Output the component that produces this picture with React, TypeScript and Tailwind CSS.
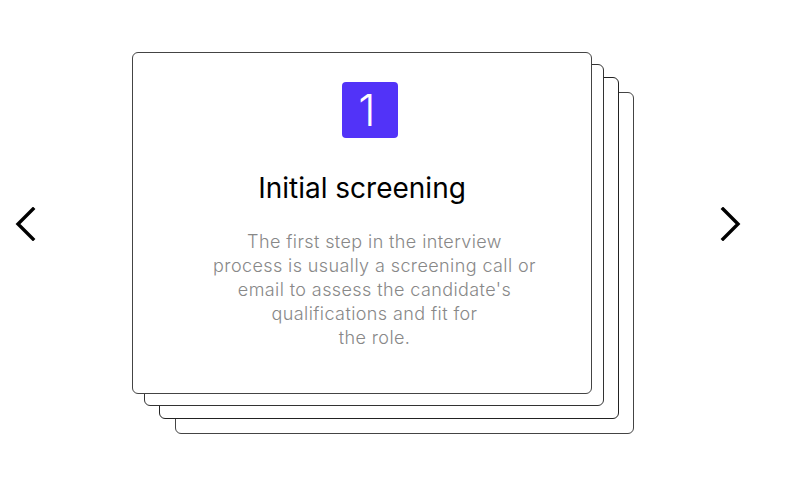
import React from "react";

const font = { fontFamily: "Inter, 'Noto Sans', sans-serif" };

function Chevron({ dir }: { dir: "left" | "right" }) {
  return (
    <svg width="22" height="34" viewBox="0 0 22 34" fill="none">
      {dir === "left" ? (
        <polyline points="18,2 3,17 18,32" stroke="#000" strokeWidth="3.4" strokeLinecap="square" />
      ) : (
        <polyline points="4,2 19,17 4,32" stroke="#000" strokeWidth="3.4" strokeLinecap="square" />
      )}
    </svg>
  );
}

export default function App() {
  return (
    <div className="flex h-[482px] w-[793px] items-start bg-white" style={font}>
      <div className="w-[132px] pl-[15px] pt-[207px]">
        <button className="block">
          <Chevron dir="left" />
        </button>
      </div>

      <div className="relative mt-[52px] h-[382px] w-[503px]">
        {/* cards stacked behind */}
        <div className="absolute left-[43px] top-[40px] h-[342px] w-[459px] rounded-[6px] border border-[#444] bg-white" />
        <div className="absolute left-[27px] top-[25px] h-[342px] w-[460px] rounded-[6px] border border-[#222] bg-white" />
        <div className="absolute left-[12px] top-[12px] h-[342px] w-[460px] rounded-[6px] border border-[#333] bg-white" />

        <div className="relative flex h-[342px] w-[460px] flex-col items-center rounded-[6px] border border-[#444] bg-white pt-[29px]">
          <div className="ml-[16px] flex h-[56px] w-[56px] items-center justify-center rounded-[4px] bg-[#5233f8] pr-[6px] text-[44px] font-light leading-none text-white">
            1
          </div>
          <h2 className="mt-[33px] text-[28px] font-normal leading-[34px] text-black">
            Initial screening
          </h2>
          <p className="mt-[25px] pl-[25px] text-center text-[18px] font-light leading-[24px] tracking-[0.4px] text-[#888]">
            The first step in the interview
            <br />
            process is usually a screening call or
            <br />
            email to assess the candidate's
            <br />
            qualifications and fit for
            <br />
            the role.
          </p>
        </div>
      </div>

      <div className="ml-[84px] pt-[207px]">
        <button className="block">
          <Chevron dir="right" />
        </button>
      </div>
    </div>
  );
}
